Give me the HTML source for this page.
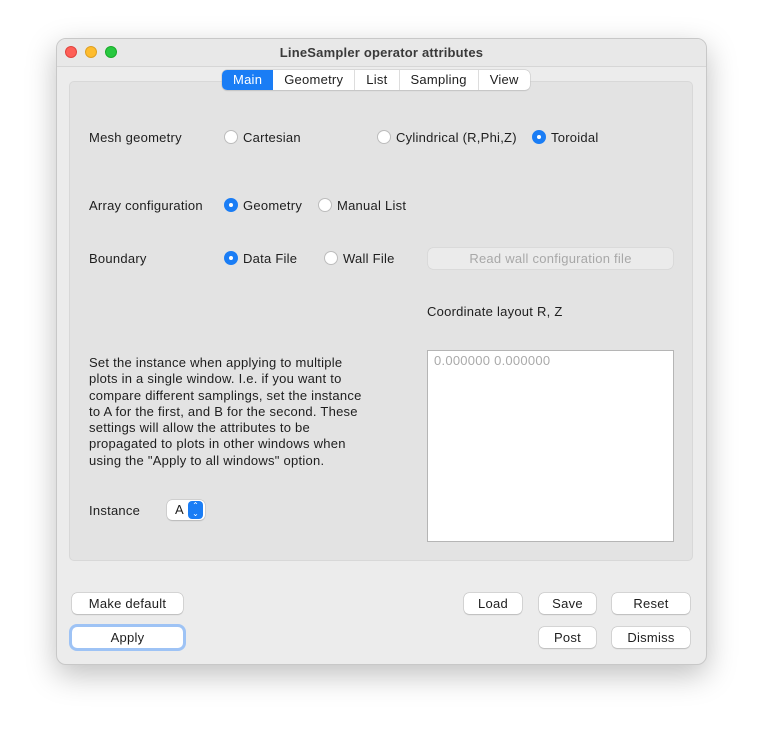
<!DOCTYPE html>
<html><head><meta charset="utf-8"><style>
*{box-sizing:border-box;margin:0;padding:0}
body{width:763px;height:739px;background:#fff;font-family:"Liberation Sans",sans-serif;font-size:13px;letter-spacing:.25px;color:#1e1e1e;position:relative;overflow:hidden}
.win{position:absolute;left:56px;top:38px;width:651px;height:627px;background:#ececec;border-radius:10px;border:1px solid #c8c8c8;box-shadow:0 10px 30px rgba(0,0,0,.25);overflow:hidden}
.title{position:absolute;left:0;top:0;width:100%;height:28px;background:#e8e8e8;border-bottom:1px solid #d6d6d6;text-align:center;line-height:27px;font-weight:bold;color:#3a3a3a;letter-spacing:.2px}
.dot{position:absolute;top:7px;width:12px;height:12px;border-radius:50%}
.a{position:absolute;white-space:nowrap}
.panel{position:absolute;left:69px;top:81px;width:624px;height:480px;background:#e3e3e3;border:1px solid #d8d8d8;border-radius:5px}
.tabs{position:absolute;left:222px;top:70px;height:20px;display:flex;background:#fff;border-radius:5px;box-shadow:0 0 0 .5px #c4c4c4,0 1px 1px rgba(0,0,0,.15);overflow:hidden}
.tabs div{padding:0 11px;line-height:20px;border-left:1px solid #ddd}
.tabs div.s{background:#1a7df5;color:#fff;border:none;padding:0 11px}
.r{position:absolute;width:14px;height:14px;border-radius:50%;background:#fff;border:1px solid #bdbdbd}
.r.on{background:#1a7df5;border-color:#1a7df5}
.r.on::after{content:"";position:absolute;left:4px;top:4px;width:4px;height:4px;border-radius:50%;background:#fff}
.btn{position:absolute;height:21px;background:#fff;border-radius:5px;box-shadow:0 0 0 .5px #bbb,0 1px 1px rgba(0,0,0,.2);text-align:center;line-height:21px}
</style></head><body>
<div class="win">
<div class="title">LineSampler operator attributes</div>
<div class="dot" style="left:8px;background:#fe5f57;border:.5px solid #e0443e"></div>
<div class="dot" style="left:28px;background:#febc2e;border:.5px solid #dea123"></div>
<div class="dot" style="left:48px;background:#28c840;border:.5px solid #1aab29"></div>
</div>
<div class="panel"></div>
<div class="tabs"><div class="s">Main</div><div style="border:none">Geometry</div><div>List</div><div>Sampling</div><div>View</div></div>

<div class="a" style="left:89px;top:130px">Mesh geometry</div>
<div class="r" style="left:224px;top:130px"></div><div class="a" style="left:243px;top:130px">Cartesian</div>
<div class="r" style="left:377px;top:130px"></div><div class="a" style="left:396px;top:130px">Cylindrical (R,Phi,Z)</div>
<div class="r on" style="left:532px;top:130px"></div><div class="a" style="left:551px;top:130px">Toroidal</div>

<div class="a" style="left:89px;top:198px">Array configuration</div>
<div class="r on" style="left:224px;top:198px"></div><div class="a" style="left:243px;top:198px">Geometry</div>
<div class="r" style="left:318px;top:198px"></div><div class="a" style="left:337px;top:198px">Manual List</div>

<div class="a" style="left:89px;top:251px">Boundary</div>
<div class="r on" style="left:224px;top:251px"></div><div class="a" style="left:243px;top:251px">Data File</div>
<div class="r" style="left:324px;top:251px"></div><div class="a" style="left:343px;top:251px">Wall File</div>
<div class="btn" style="left:428px;top:248px;width:245px;background:#ebebeb;color:#a8a8a8;box-shadow:0 0 0 .5px #d0d0d0">Read wall configuration file</div>

<div class="a" style="left:427px;top:304px">Coordinate layout R, Z</div>
<div class="a" style="left:427px;top:350px;width:247px;height:192px;background:#fff;border:1px solid #b5b5b5;padding:2px 6px;color:#aaa">0.000000 0.000000</div>

<div class="a" style="left:89px;top:355px;line-height:16.3px">Set the instance when applying to multiple<br>plots in a single window. I.e. if you want to<br>compare different samplings, set the instance<br>to A for the first, and B for the second. These<br>settings will allow the attributes to be<br>propagated to plots in other windows when<br>using the "Apply to all windows" option.</div>

<div class="a" style="left:89px;top:503px">Instance</div>
<div class="btn" style="left:167px;top:500px;width:38px;height:20px;line-height:20px;text-align:left;padding-left:8px">A</div>
<div class="a" style="left:188px;top:501px;width:15px;height:18px;background:#1a7df5;border-radius:4px;color:#fff;font-size:8px;line-height:8px;text-align:center;padding-top:1px;letter-spacing:0">⌃<br>⌄</div>

<div class="btn" style="left:72px;top:593px;width:111px">Make default</div>
<div class="btn" style="left:72px;top:627px;width:111px;box-shadow:0 0 0 3px #9ec3f5,0 0 0 .5px #999">Apply</div>
<div class="btn" style="left:464px;top:593px;width:58px">Load</div>
<div class="btn" style="left:539px;top:593px;width:57px">Save</div>
<div class="btn" style="left:612px;top:593px;width:78px">Reset</div>
<div class="btn" style="left:539px;top:627px;width:57px">Post</div>
<div class="btn" style="left:612px;top:627px;width:78px">Dismiss</div>
</body></html>
